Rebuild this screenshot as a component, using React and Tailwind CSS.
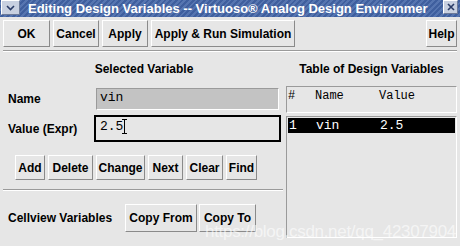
function Btn({ children, className = '' }) {
  return (
    <div
      className={
        'flex items-center justify-center h-full border border-t-white border-l-white border-b-[#8a8a8a] border-r-[#8a8a8a] bg-[#e6e6e6] font-bold text-[12px] text-black ' +
        className
      }
    >
      {children}
    </div>
  );
}

function App() {
  return (
    <div
      className="w-[460px] h-[246px] bg-[#e6e6e6] overflow-hidden relative"
      style={{ fontFamily: '"Liberation Sans", Arial, sans-serif' }}
    >
      {/* title bar */}
      <div className="h-[17px] flex items-center bg-[repeating-linear-gradient(135deg,#3f5f9e_0px,#3f5f9e_2px,#5675b0_2px,#5675b0_4px)]">
        <div className="ml-[1px] w-[19px] h-[15px] bg-[#c8d0e0] border border-t-white border-l-white border-b-[#6d7a98] border-r-[#6d7a98] flex items-center justify-center self-start">
          <svg width="9" height="6" viewBox="0 0 9 6">
            <path d="M1 1 L4.5 4.5 L8 1" stroke="#2a3b66" strokeWidth="1.6" fill="none" />
          </svg>
        </div>
        <div className="ml-[8px] w-[400px] overflow-hidden whitespace-nowrap text-white font-bold text-[13px] leading-[17px]">
          Editing Design Variables -- Virtuoso® Analog Design Environmer
        </div>
        <div className="ml-[15px] w-[15px] h-[14px] bg-[#c8d0e0] border border-t-white border-l-white border-b-[#6d7a98] border-r-[#6d7a98] flex items-center justify-center self-start">
          <svg width="8" height="8" viewBox="0 0 8 8">
            <path d="M1 1 L7 7 M7 1 L1 7" stroke="#2a3b66" strokeWidth="1.6" />
          </svg>
        </div>
      </div>

      {/* toolbar */}
      <div className="flex h-[27px] mt-[3px] pl-[3px] pr-[3px]">
        <Btn className="w-[47px]">OK</Btn>
        <Btn className="w-[46px] ml-[3px]">Cancel</Btn>
        <Btn className="w-[46px] ml-[3px]">Apply</Btn>
        <Btn className="w-[144px] ml-[3px]">Apply &amp; Run Simulation</Btn>
        <div className="flex-1" />
        <Btn className="w-[31px]">Help</Btn>
      </div>
      <div className="mt-[3px] mx-[3px] h-[2px] border-t border-t-[#9a9a9a] border-b border-b-white" />

      {/* main */}
      <div className="flex">
        {/* left */}
        <div className="w-[286px]">
          <div className="mt-[10px] h-[15px] text-center font-bold text-[12px] leading-[15px] pl-[2px]">
            Selected Variable
          </div>
          <div className="mt-[11px] flex items-center h-[22px]">
            <div className="w-[96px] pl-[8px] font-bold text-[12px]">Name</div>
            <div className="w-[183px] h-[22px] bg-[#c3c3c3] border border-t-[#9a9a9a] border-l-[#9a9a9a] border-b-white border-r-white pl-[3px] text-[13px] leading-[17px] font-['Liberation_Mono',monospace]">
              vin
            </div>
          </div>
          <div className="mt-[5px] flex items-center h-[27px]">
            <div className="w-[94px] pl-[8px] font-bold text-[12px] whitespace-nowrap">Value (Expr)</div>
            <div className="w-[187px] h-[27px] border-2 border-black bg-[#e6e6e6] pl-[4px] text-[13px] leading-[20px] font-['Liberation_Mono',monospace] flex items-start">
              2.5
              <span className="ml-[1px] mt-[2px] inline-block w-[5px] h-[15px] border-l-[1.5px] border-black relative">
                <span className="absolute -left-[3px] top-0 w-[5px] h-[1px] bg-black" />
                <span className="absolute -left-[3px] bottom-0 w-[5px] h-[1px] bg-black" />
              </span>
            </div>
          </div>
          <div className="mt-[13px] flex h-[25px] pl-[15px]">
            <Btn className="w-[30px]">Add</Btn>
            <Btn className="w-[45px] ml-[3px]">Delete</Btn>
            <Btn className="w-[49px] ml-[3px]">Change</Btn>
            <Btn className="w-[35px] ml-[3px]">Next</Btn>
            <Btn className="w-[37px] ml-[3px]">Clear</Btn>
            <Btn className="w-[31px] ml-[3px]">Find</Btn>
          </div>
          <div className="mt-[9px] ml-[3px] w-[280px] h-[2px] border-t border-t-[#9a9a9a] border-b border-b-white" />
          <div className="mt-[13px] flex items-center h-[28px]">
            <div className="w-[125px] pl-[8px] font-bold text-[12px] whitespace-nowrap">Cellview Variables</div>
            <Btn className="w-[72px]">Copy From</Btn>
            <Btn className="w-[57px] ml-[2px]">Copy To</Btn>
          </div>
        </div>

        {/* right */}
        <div className="w-[171px]">
          <div className="mt-[10px] h-[15px] text-center font-bold text-[12px] leading-[15px]">
            Table of Design Variables
          </div>
          <div className="mt-[9px] h-[27px] border border-t-[#9a9a9a] border-l-[#9a9a9a] border-b-white border-r-white flex text-[12px] leading-[14px] pt-[2px] font-['Liberation_Mono',monospace]">
            <span className="w-[28px] pl-[1px]">#</span>
            <span className="w-[64px]">Name</span>
            <span>Value</span>
          </div>
          <div className="mt-[3px] h-[122px] border border-t-[#9a9a9a] border-l-[#9a9a9a] border-b-white border-r-white p-[1px]">
            <div className="h-[15px] bg-black text-white flex text-[13px] leading-[15px] font-['Liberation_Mono',monospace]">
              <span className="w-[28px] pl-[1px]">1</span>
              <span className="w-[64px]">vin</span>
              <span>2.5</span>
            </div>
          </div>
        </div>
      </div>

      <div className="absolute left-[205px] top-[219px] text-[17px] text-white/60 whitespace-nowrap tracking-[-0.3px]">
        https://blog.csdn.net/qq_42307904
      </div>
    </div>
  );
}

export default App;
